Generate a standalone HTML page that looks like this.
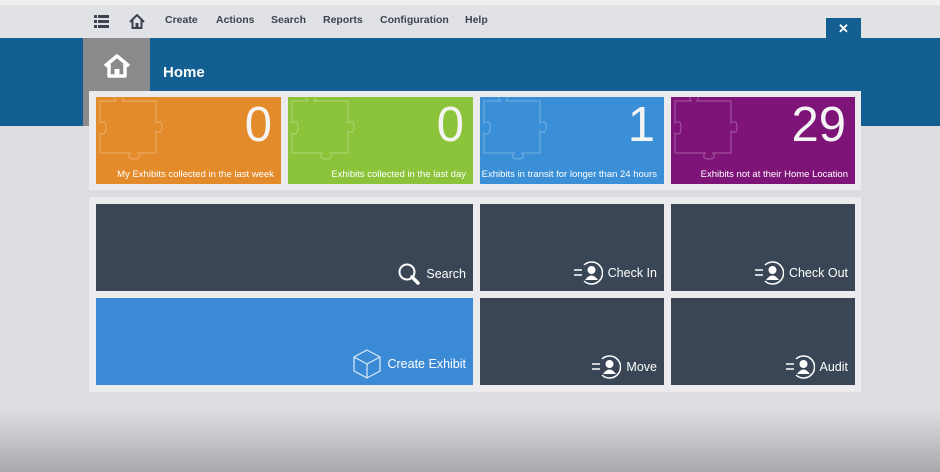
<!DOCTYPE html>
<html><head><style>
*{margin:0;padding:0;box-sizing:border-box}
body{width:940px;height:472px;overflow:hidden;font-family:"Liberation Sans",sans-serif;background:#dcdde0;position:relative}
.a{position:absolute}
.top{left:0;top:0;width:940px;height:5px;background:#efefef}
.nav{left:0;top:5px;width:940px;height:33px;background:#e1e2e5}
.nav span{position:absolute;top:9px;font-size:10.5px;font-weight:bold;color:#3c4350}
.band{left:0;top:38px;width:940px;height:88px;background:#135f91}
.bottom{left:0;top:410px;width:940px;height:62px;background:linear-gradient(#dcdde0,#a9aaae)}
.panel{background:#ebebed}
.t{position:absolute;color:#fff;overflow:hidden}
.t .n{position:absolute;right:9px;top:0px;font-size:49px;color:#f4f4f4}
.t .l{position:absolute;right:7px;bottom:4px;font-size:9.5px;white-space:nowrap}
.t svg{position:absolute;left:2px;top:-4px}
.d{position:absolute;background:#3a4655;color:#fff}
.d .l{position:absolute;right:7px;bottom:5px;font-size:12.5px;display:flex;align-items:center;gap:5px;white-space:nowrap}
</style></head><body>
<div class="a top"></div>
<div class="a nav">
<svg class="a" style="left:94px;top:10px" width="15" height="13"><g fill="#3c4350"><rect x="0" y="0" width="3" height="3"/><rect x="4" y="0" width="11" height="3"/><rect x="0" y="5" width="3" height="3"/><rect x="4" y="5" width="11" height="3"/><rect x="0" y="10" width="3" height="3"/><rect x="4" y="10" width="11" height="3"/></g></svg>
<svg class="a" style="left:129px;top:9px" width="16" height="15"><path d="M1 8 L8 1 L15 8 M3.5 6 V14 H12.5 V6" fill="none" stroke="#3c4350" stroke-width="2"/><rect x="6.5" y="9" width="3" height="5" fill="#3c4350"/></svg>
<span style="left:165px">Create</span><span style="left:216px">Actions</span><span style="left:271px">Search</span><span style="left:323px">Reports</span><span style="left:380px">Configuration</span><span style="left:465px">Help</span>
</div>
<div class="a" style="left:826px;top:18px;width:35px;height:21px;background:#135f91;color:#fff;font-weight:bold;font-size:13px;text-align:center;line-height:22px">✕</div>
<div class="a band"></div>
<div class="a" style="left:83px;top:38px;width:67px;height:88px;background:#8a8a8c"></div>
<svg class="a" style="left:102px;top:53px" width="30" height="26"><path d="M3 13 L15 3 L27 13 M7 11 V23 H23 V11" fill="none" stroke="#fff" stroke-width="3.5" stroke-linejoin="round"/><rect x="12.5" y="16" width="5" height="7" fill="#fff"/></svg>
<div class="a" style="left:163px;top:64px;color:#fff;font-size:15px;font-weight:bold">Home</div>
<div class="a bottom"></div>
<div class="a panel" style="left:89px;top:91px;width:772px;height:99px"></div>
<div class="a panel" style="left:89px;top:197px;width:772px;height:195px"></div>

<svg width="0" height="0" style="position:absolute"><defs><path id="pz" d="M2 8 H18 Q14 2 21 2 Q28 2 24 8 H58 V30 Q64 26 64 34 Q64 42 58 38 V60 H40 Q44 66 36 66 Q28 66 32 60 H2 V40 Q8 44 8 34 Q8 26 2 30 Z" fill="none" stroke="rgba(255,255,255,0.25)" stroke-width="1.2"/></defs></svg>
<div class="t" style="left:96px;top:97px;width:185px;height:87px;background:#e38b2a"><svg width="70" height="70"><use href="#pz"/></svg><span class="n">0</span><span class="l">My Exhibits collected in the last week</span></div>
<div class="t" style="left:288px;top:97px;width:185px;height:87px;background:#8bc43a"><svg width="70" height="70"><use href="#pz"/></svg><span class="n">0</span><span class="l">Exhibits collected in the last day</span></div>
<div class="t" style="left:480px;top:97px;width:184px;height:87px;background:#3a8fd6"><svg width="70" height="70"><use href="#pz"/></svg><span class="n">1</span><span class="l">Exhibits in transit for longer than 24 hours</span></div>
<div class="t" style="left:671px;top:97px;width:184px;height:87px;background:#7e1478"><svg width="70" height="70"><use href="#pz"/></svg><span class="n">29</span><span class="l">Exhibits not at their Home Location</span></div>

<div class="d" style="left:96px;top:204px;width:377px;height:87px"><div class="l"><svg width="24" height="24"><circle cx="10" cy="10" r="7.5" fill="none" stroke="#fff" stroke-width="2"/><path d="M15 15 L21 21" stroke="#fff" stroke-width="3.5" stroke-linecap="round"/></svg>Search</div></div>
<div class="d" style="left:96px;top:298px;width:377px;height:87px;background:#3a8ad6"><div class="l" style="bottom:6px"><svg width="30" height="30"><path d="M15 1 L28 8 L28 22 L15 29 L2 22 L2 8 Z M2 8 L15 15 L28 8 M15 15 V29" fill="none" stroke="#dfeaf6" stroke-width="1.2"/></svg>Create Exhibit</div></div>
<div class="d" style="left:480px;top:204px;width:184px;height:87px"><div class="l"><svg width="30" height="26"><path d="M1 10 H9 M1 15 H9" stroke="#fff" stroke-width="1.5"/><path d="M11 5 A11 11 0 1 1 11 21" fill="none" stroke="#fff" stroke-width="1.5"/><circle cx="18.5" cy="10" r="4" fill="#fff"/><path d="M12 20 Q18.5 11 25 20 Z" fill="#fff"/></svg>Check In</div></div>
<div class="d" style="left:671px;top:204px;width:184px;height:87px"><div class="l"><svg width="30" height="26"><path d="M1 10 H9 M1 15 H9" stroke="#fff" stroke-width="1.5"/><path d="M11 5 A11 11 0 1 1 11 21" fill="none" stroke="#fff" stroke-width="1.5"/><circle cx="18.5" cy="10" r="4" fill="#fff"/><path d="M12 20 Q18.5 11 25 20 Z" fill="#fff"/></svg>Check Out</div></div>
<div class="d" style="left:480px;top:298px;width:184px;height:87px"><div class="l"><svg width="30" height="26"><path d="M1 10 H9 M1 15 H9" stroke="#fff" stroke-width="1.5"/><path d="M11 5 A11 11 0 1 1 11 21" fill="none" stroke="#fff" stroke-width="1.5"/><circle cx="18.5" cy="10" r="4" fill="#fff"/><path d="M12 20 Q18.5 11 25 20 Z" fill="#fff"/></svg>Move</div></div>
<div class="d" style="left:671px;top:298px;width:184px;height:87px"><div class="l"><svg width="30" height="26"><path d="M1 10 H9 M1 15 H9" stroke="#fff" stroke-width="1.5"/><path d="M11 5 A11 11 0 1 1 11 21" fill="none" stroke="#fff" stroke-width="1.5"/><circle cx="18.5" cy="10" r="4" fill="#fff"/><path d="M12 20 Q18.5 11 25 20 Z" fill="#fff"/></svg>Audit</div></div>
</body></html>
